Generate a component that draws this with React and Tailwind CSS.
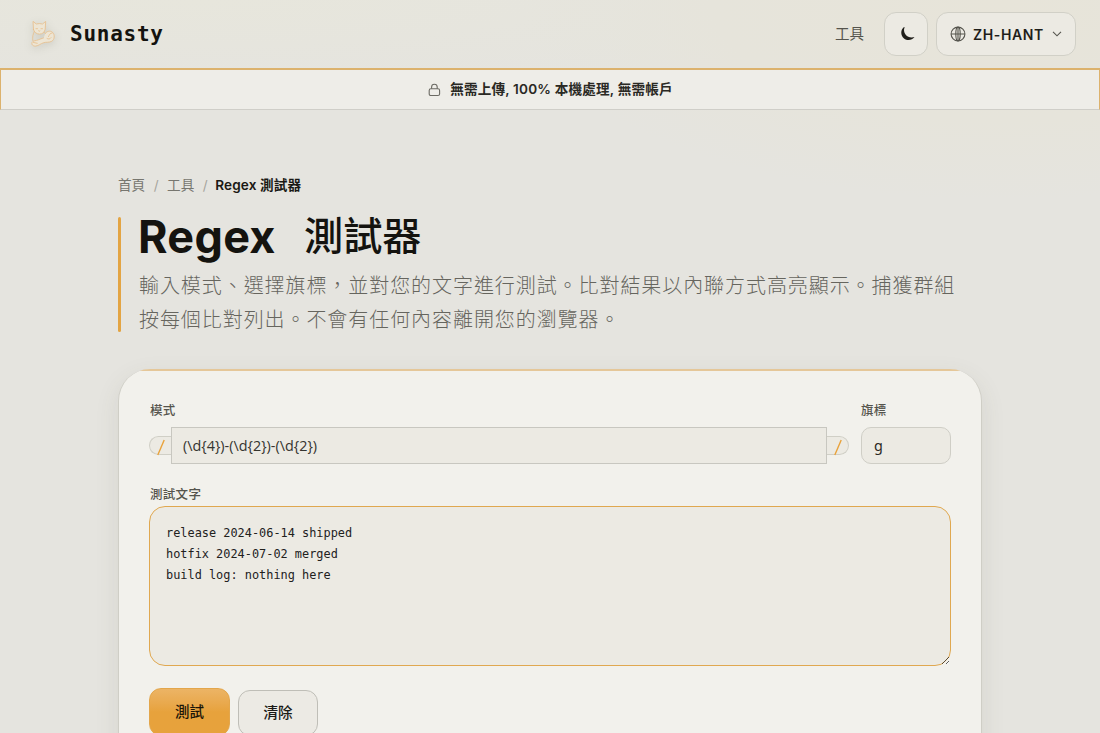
import React, { useState } from 'react';

const SAMPLE = `release 2024-06-14 shipped
hotfix 2024-07-02 merged
build log: nothing here`;

const CatLogo = () => (
  <svg width="36" height="36" viewBox="0 0 36 36" fill="none" stroke="#e8b473" strokeWidth="0.8" strokeLinecap="round" strokeLinejoin="round" className="opacity-80 drop-shadow-[0_2px_5px_rgba(90,90,80,0.25)]">
    <path d="M9.500 13.500 9 5.400l3.300 2.600q3.200-.9 6.200 0l3.200-2.600-.5 7.800q-1 4.800-5.800 4.900-4.600-.2-5.900-4.600z" fill="#efe6d3" />
    <path d="M10.300 15.500c-1.500 3-1.800 5.500-1.500 9M20.300 16c1.700 1.500 2.700 3.500 2.600 6" />
    <path d="M21.300 17.500c1.500-2.500 5-3.200 7.200-1.200 2.600 2.500 2.200 7.200-.8 9-2.500 1.400-5.500.6-8 1.400-3 .9-5 3-8 3.400-2.700.3-4.500-1.700-3.600-3.700 1-2 4-1.500 6.200-2.600l5.200-1.900" fill="#efe6d3" />
    <path d="M28 17c-2-.2-2.600 2-3.500 3.600M23 22.500c1.500 1 3 .6 4-.8M9.500 26.500l3.800.8M12 12.700h1.500M17 12.700h1.500M14.600 14.800l.6.500.7-.5" />
  </svg>
);

const MoonIcon = () => (
  <svg width="16" height="16" viewBox="0 0 16 16" fill="#1f1e1a" className="ml-[3px]">
    <path d="M4 1C.4 3.700.4 9.400 4 12.400c3.400 2.700 8.200 1.800 10.500-1.400-3.500 1-6.800.2-8.800-2.300C3.900 6.400 3.500 3.700 4.600 1.200z" />
  </svg>
);

const GlobeIcon = () => (
  <svg width="16" height="16" viewBox="0 0 16 16" fill="none" stroke="#55544d" strokeWidth="1.100">
    <circle cx="8" cy="8" r="6.900" />
    <ellipse cx="8" cy="8" rx="2.200" ry="6.900" />
    <path d="M1.100 8h13.800M8 1.100v13.800" />
  </svg>
);

const LockIcon = () => (
  <svg width="13" height="14" viewBox="0 0 13 14" fill="none" stroke="#6b6a63" strokeWidth="1.100">
    <rect x="1.200" y="5.800" width="10.400" height="6.700" rx="1.600" />
    <path d="M3.600 5.800V4a2.800 2.800 0 0 1 5.600 0v1.800" />
  </svg>
);

const Header = () => (
  <header className="flex h-[68px] items-center justify-between pl-6 pr-6">
    <div className="flex items-center gap-[10px]">
      <CatLogo />
      <span className="font-['DejaVu_Sans_Mono',monospace] text-[21px] leading-none font-bold tracking-[0.750px] text-[#14130f]">Sunasty</span>
    </div>
    <div className="flex items-center">
      <a className="mr-5 text-[14.500px] text-[#55544d]">工具</a>
      <button className="mr-2 flex h-11 w-11 items-center justify-center rounded-xl border border-[#d1d0c7] bg-[#eceae3]">
        <MoonIcon />
      </button>
      <button className="flex h-11 w-[140px] items-center rounded-xl border border-[#d1d0c7] bg-[#eceae3] pl-[13px]">
        <GlobeIcon />
        <span className="ml-[7px] text-[14px] font-semibold tracking-[0.600px] text-[#1f1e1a]">ZH-HANT</span>
        <svg className="ml-[8px]" width="10" height="6" viewBox="0 0 10 6" fill="none" stroke="#55544d" strokeWidth="1.100"><path d="m1 .8 4 4 4-4" /></svg>
      </button>
    </div>
  </header>
);

const PrivacyBar = () => (
  <div className="flex h-[42px] items-center justify-center gap-[9px] border border-t-2 border-[#dcb26d] border-b-[#cfcec8] bg-[#eeede8] pl-px">
    <LockIcon />
    <span className="text-[13.600px] font-semibold tracking-[0.180px] text-[#2a2924]">無需上傳, 100% 本機處理, 無需帳戶</span>
  </div>
);

const Hero = () => (
  <section>
    <nav className="flex h-5 items-center gap-[8.500px] text-[13.600px] text-[#77766f]">
      <span>首頁</span>
      <span className="text-[#a5a49d]">/</span>
      <span>工具</span>
      <span className="text-[#a5a49d]">/</span>
      <span className="-ml-px font-semibold tracking-[0.120px] text-[#1a1915]">Regex 測試器</span>
    </nav>
    <div className="mt-[22px] flex h-[115px]">
      <div className="w-[3px] shrink-0 rounded-sm bg-[#e3a443]" />
      <div className="ml-[17px]">
        <h1 className="flex h-[38px] items-center text-[#14130f]">
          <span className="w-[166px] text-[45px] leading-none font-bold tracking-[0.300px]">Regex</span>
          <span className="text-[39.200px] leading-none font-medium">測試器</span>
        </h1>
        <p className="mt-[14px] w-[830px] pl-px text-[20px] leading-[34px] font-light tracking-[0.930px] text-[#66655e]">
          輸入模式、選擇旗標，並對您的文字進行測試。比對結果以內聯方式高亮顯示。捕獲群組
          <br />
          按每個比對列出。不會有任何內容離開您的瀏覽器。
        </p>
      </div>
    </div>
  </section>
);

const Slash = () => (
  <svg width="10" height="17" viewBox="0 0 10 17" fill="none" stroke="#e9a23b" strokeWidth="1.400" className="mt-[3px] shrink-0">
    <path d="M8.200 1 1.800 16" />
  </svg>
);

const RegexTester = () => {
  const [pattern, setPattern] = useState('(\\d{4})-(\\d{2})-(\\d{2})');
  const [flags, setFlags] = useState('g');
  const [text, setText] = useState(SAMPLE);

  return (
    <div className="relative mt-[37px] h-[480px] overflow-hidden rounded-[32px] border border-t-0 border-[#cfcec6] bg-[#f2f1ec] px-[30px] pt-[33px] shadow-[0_8px_24px_rgba(80,78,60,0.10)]">
      <div className="absolute inset-x-0 top-0 h-[2px] bg-[#e5c799]" />
      <div className="flex gap-3">
        <div className="w-[700px]">
          <label className="block h-[18px] pl-px text-[12.500px] leading-[18px] font-medium tracking-[0.300px] text-[#55544d]">模式</label>
          <div className="mt-[7px] flex items-center">
            <span className="flex h-[19px] w-[22px] items-center justify-center rounded-l-full border border-r-0 border-[#d0cfc6] bg-[#eceae3]">
              <Slash />
            </span>
            <input
              value={pattern}
              onChange={(e) => setPattern(e.target.value)}
              className="h-[37px] w-[656px] border border-[#c8c7c0] bg-[#eceae3] px-[11px] font-['Open_Sans',sans-serif] text-[14.400px] text-[#35342f] outline-none"
            />
            <span className="flex h-[19px] w-[22px] items-center justify-center rounded-r-full border border-l-0 border-[#d0cfc6] bg-[#eceae3]">
              <Slash />
            </span>
          </div>
        </div>
        <div className="w-[90px]">
          <label className="block h-[18px] text-[12.500px] leading-[18px] font-medium tracking-[0.300px] text-[#55544d]">旗標</label>
          <input
            value={flags}
            onChange={(e) => setFlags(e.target.value)}
            className="mt-[7px] block h-[37px] w-[90px] rounded-[10px] border border-[#cfcec6] bg-[#eceae3] px-3 font-['Noto_Sans',sans-serif] text-[14.400px] text-[#2a2924] outline-none"
          />
        </div>
      </div>
      <label className="mt-[22px] block h-[18px] pl-px text-[12.500px] leading-[18px] font-medium tracking-[0.300px] text-[#55544d]">測試文字</label>
      <textarea
        value={text}
        onChange={(e) => setText(e.target.value)}
        spellCheck={false}
        className="mt-[2px] block h-[160px] w-[802px] rounded-2xl border border-[#e0a850] bg-[#eceae3] px-4 py-4 font-['DejaVu_Sans_Mono',monospace] text-[11.900px] leading-[21px] text-[#22211d] outline-none"
      />
      <div className="mt-[22px] flex gap-2">
        <button className="h-[48px] w-[81px] rounded-xl border border-[#e3a64b] bg-linear-to-b from-[#ecb465] to-[#e7a23c] to-50% text-[14.500px] font-medium text-[#1b1508]">測試</button>
        <button className="mt-[2px] h-[46px] w-[80px] rounded-xl border border-[#bfbeb7] bg-[#eceae4] text-[14.500px] font-medium text-[#1b1a16]">清除</button>
      </div>
    </div>
  );
};

const App = () => (
  <div className="h-[733px] overflow-hidden bg-[#e5e4df] bg-[radial-gradient(ellipse_480px_200px_at_1000px_0px,#e7e4d9_0%,#e6e4db_60%,transparent_100%),radial-gradient(ellipse_700px_90px_at_200px_0px,#e7e6dc,transparent)] font-[Inter,'Noto_Sans_CJK_TC',sans-serif]">
    <Header />
    <PrivacyBar />
    <main className="ml-[118px] w-[864px] pt-[65px]">
      <Hero />
      <RegexTester />
    </main>
  </div>
);

export default App;
